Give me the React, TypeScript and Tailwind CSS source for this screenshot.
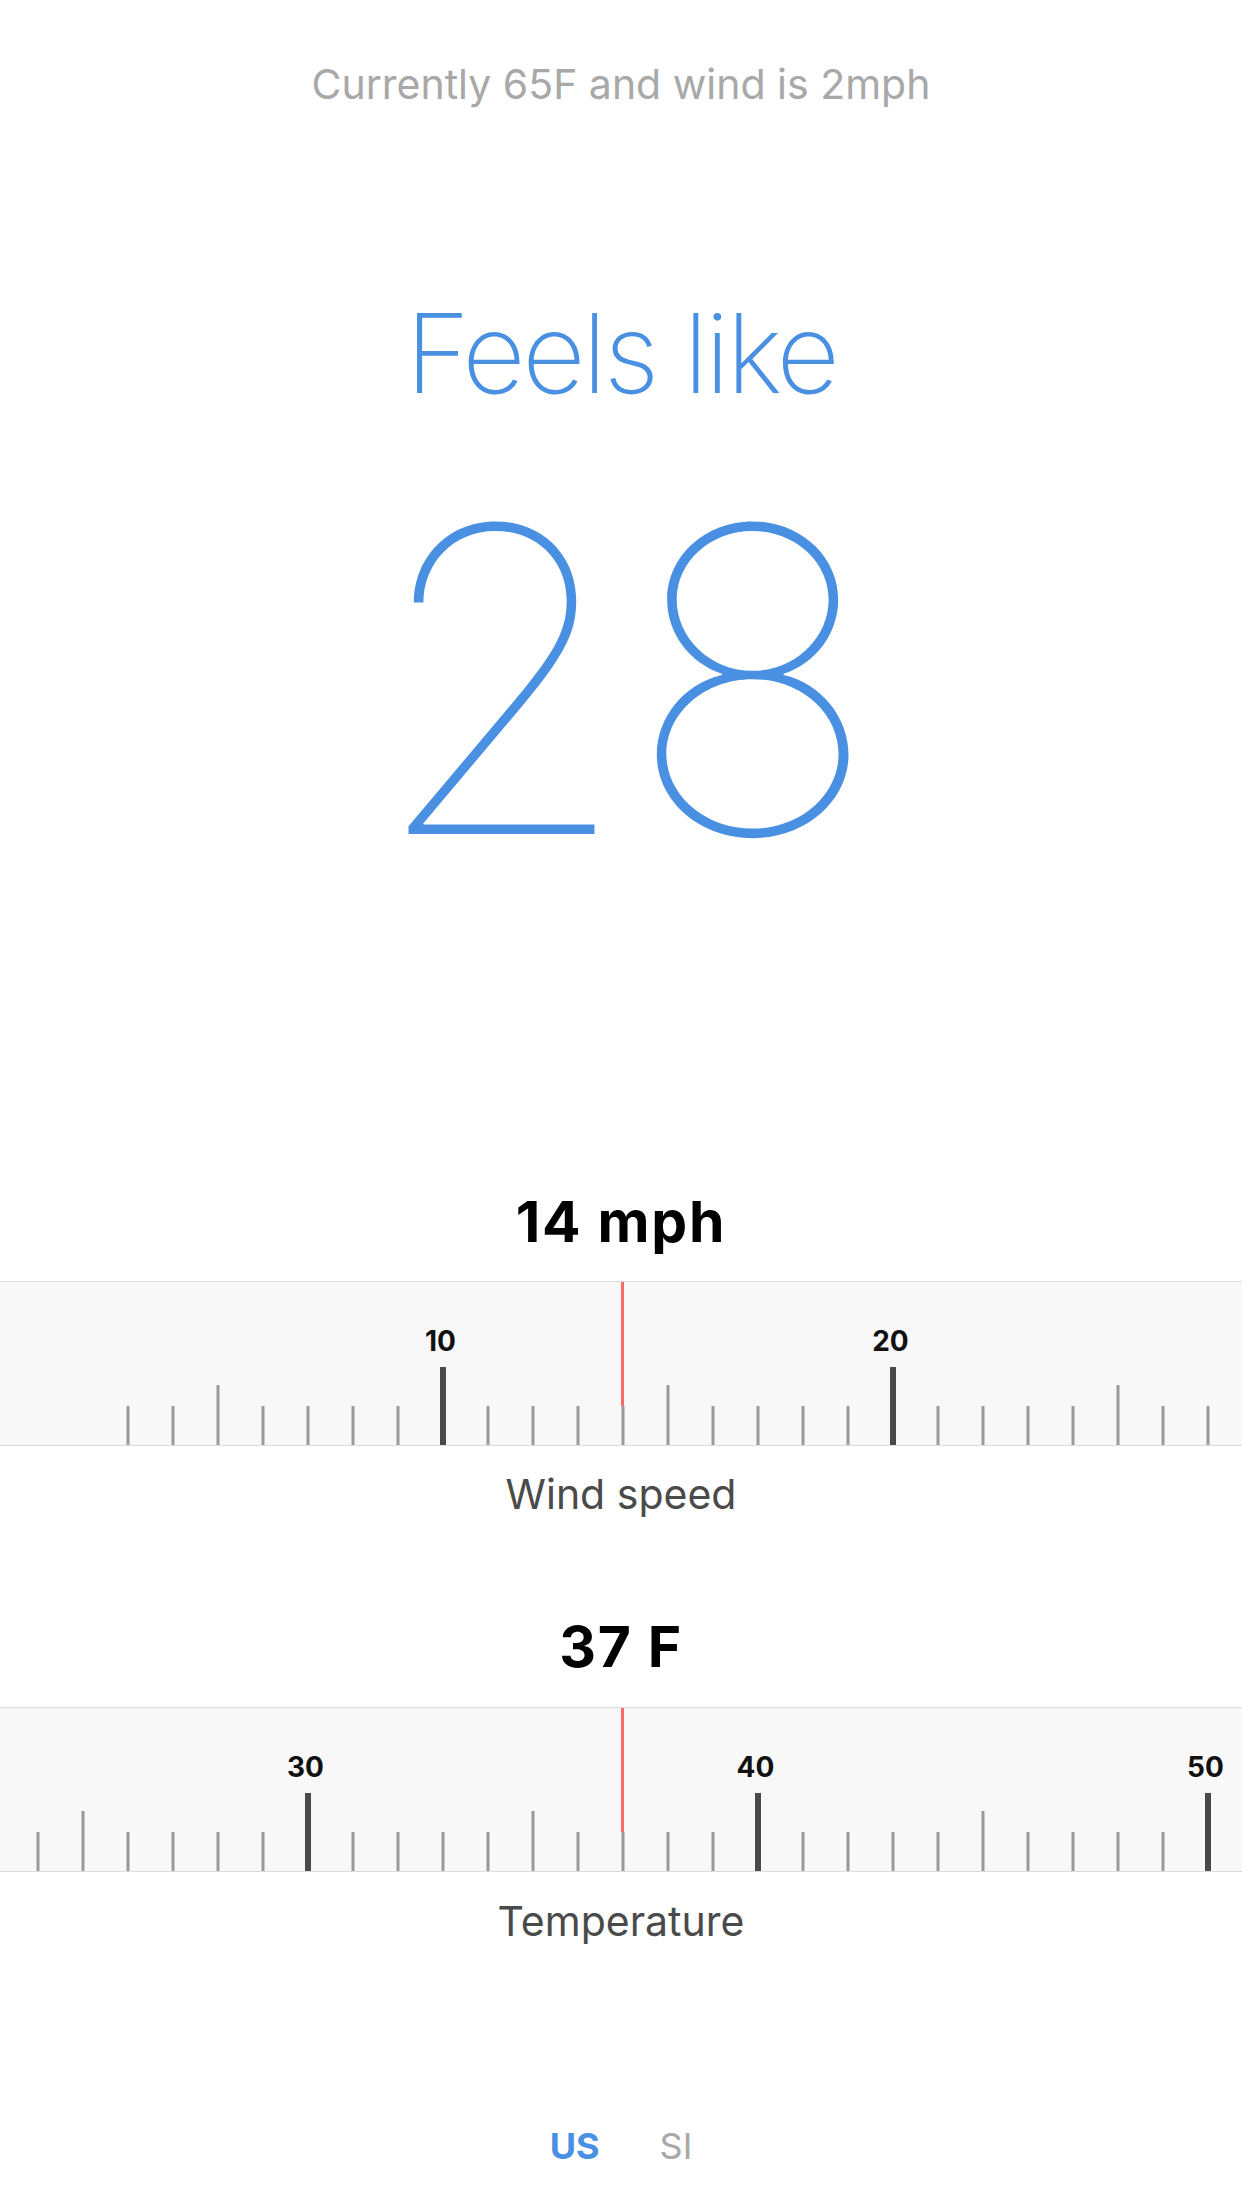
import React from "react";

const CENTER = 622.5;
const STEP = 45;

interface RulerProps {
  value: number;
  min: number;
  max: number;
}

function Ruler({ value, min, max }: RulerProps) {
  const ticks: number[] = [];
  for (let v = min; v <= max; v++) {
    const x = CENTER + (v - value) * STEP;
    if (x > -10 && x < 1252) ticks.push(v);
  }

  return (
    <div className="relative h-[165px] w-full overflow-hidden border-y border-[#dcdcdc] bg-[#f8f8f8]">
      {ticks.map((v) => {
        const x = CENTER + (v - value) * STEP;
        const major = v % 10 === 0;
        const mid = !major && v % 5 === 0;
        return (
          <React.Fragment key={v}>
            {major ? (
              <>
                <div className="absolute bottom-0 h-[78px] w-[6px] -translate-x-1/2 bg-[#4a4a4a]" style={{ left: x }} />
                <div className="absolute top-[45px] -translate-x-1/2 text-[28px] leading-none font-bold text-[#111]" style={{ left: x - 2 }}>
                  {v}
                </div>
              </>
            ) : (
              <div className={`absolute bottom-0 w-[3px] -translate-x-1/2 bg-[#999999] ${mid ? "h-[60px]" : "h-[39px]"}`} style={{ left: x }} />
            )}
          </React.Fragment>
        );
      })}
      <div className="absolute top-0 left-[621px] h-[124px] w-[3px] bg-[#ff6868]" />
    </div>
  );
}

export default function App() {
  return (
    <div className="flex min-h-[2208px] w-full flex-col items-center bg-white font-['Inter','Liberation_Sans',sans-serif]">
      <p className="mt-[64px] text-[41px] leading-none text-[#a8a8a8]">Currently 65F and wind is 2mph</p>

      <h1 className="mt-[193px] text-[110px] leading-none font-extralight tracking-[-0.03em] text-[#4a90e2]">Feels like</h1>
      <div className="mt-[60px] text-[424px] leading-none font-thin tracking-[-0.015em] text-[#4a90e2]">28</div>

      <div className="mt-[301px] text-[57px] leading-none font-bold tracking-[0.03em] text-black">14 mph</div>
      <div className="mt-[31px] w-full">
        <Ruler value={14} min={3} max={60} />
      </div>
      <div className="mt-[28px] text-[41px] leading-none text-[#4a4a4a]">Wind speed</div>

      <div className="mt-[103px] text-[57px] leading-none font-bold tracking-[0.03em] text-black">37 F</div>
      <div className="mt-[32px] w-full">
        <Ruler value={37} min={-40} max={50} />
      </div>
      <div className="mt-[29px] text-[41px] leading-none text-[#4a4a4a]">Temperature</div>

      <div className="mt-[186px] flex items-center gap-[60px] text-[36px] leading-none">
        <button type="button" className="font-bold text-[#4a90e2]">US</button>
        <button type="button" className="text-[#a8a8a8]">SI</button>
      </div>
    </div>
  );
}
